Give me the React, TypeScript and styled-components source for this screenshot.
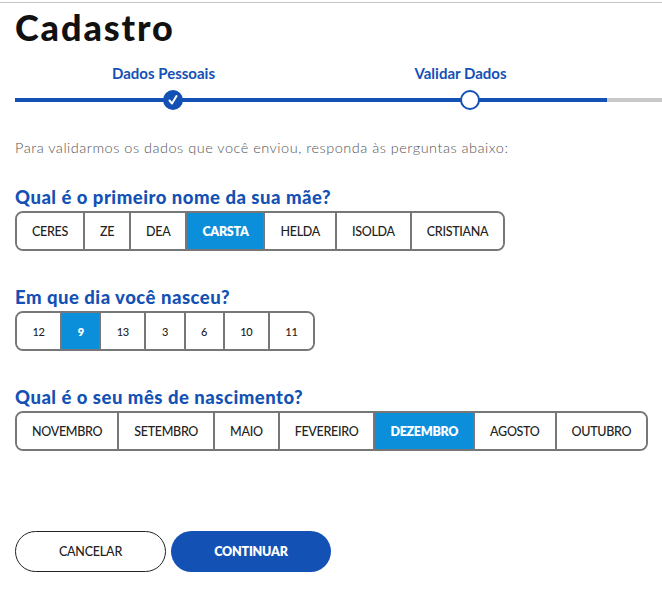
import * as React from "react"
import styled, { createGlobalStyle } from "styled-components"

const GlobalStyle = createGlobalStyle`
  html, body {
    margin: 0;
    padding: 0;
    background: #fff;
    overflow-x: hidden;
  }
  body {
    font-family: "Lato", "Open Sans", sans-serif;
    color: #222;
  }
`

const Page = styled.div`
  border-top: 1px solid #c4c4c4;
  margin-top: 2px;
  padding: 0 0 24px 15px;
`

const Title = styled.h1`
  margin: 2px 0 0;
  font-size: 36px;
  line-height: 44px;
  font-weight: 900;
  color: #111;
  letter-spacing: 1.9px;
`

const Stepper = styled.div`
  position: relative;
  display: flex;
  padding-left: 9px;
  margin-top: 16px;

  &::before {
    content: "";
    position: absolute;
    left: 0;
    width: 592px;
    bottom: 8px;
    height: 4px;
    background: #1351b4;
  }

  &::after {
    content: "";
    position: absolute;
    left: 592px;
    right: 0;
    bottom: 8px;
    height: 4px;
    background: #c8c8c8;
  }
`

const Step = styled.div`
  width: 297px;
  display: flex;
  flex-direction: column;
  align-items: center;
  gap: 9px;
`

const StepLabel = styled.span`
  margin-right: 18px;
  font-size: 15px;
  line-height: 16px;
  font-weight: 700;
  color: #1351b4;
`

const StepDot = styled.span<{ $done?: boolean }>`
  position: relative;
  z-index: 1;
  box-sizing: border-box;
  width: 20px;
  height: 20px;
  border-radius: 50%;
  border: 2px solid #1351b4;
  background: ${(p) => (p.$done ? "#1351b4" : "#fff")};
  display: flex;
  align-items: center;
  justify-content: center;
`

const Intro = styled.p`
  margin: 29px 0 0;
  font-size: 14.5px;
  line-height: 18px;
  font-weight: 300;
  letter-spacing: 0.5px;
  color: #555;
`

const Questions = styled.div`
  display: flex;
  flex-direction: column;
  gap: 35px;
  margin-top: 29px;
`

const Question = styled.section`
  display: flex;
  flex-direction: column;
  align-items: flex-start;
  gap: 3px;
`

const QuestionTitle = styled.h2`
  margin: 0;
  font-size: 18.5px;
  line-height: 22px;
  font-weight: 900;
  letter-spacing: 0.5px;
  color: #1351b4;
`

const Options = styled.div`
  display: flex;
  border: 2px solid #777;
  border-radius: 8px;
  overflow: hidden;
`

const Option = styled.button<{ $selected?: boolean; $small?: boolean }>`
  height: 36px;
  padding: 0 ${(p) => (p.$small ? 15.5 : 15)}px;
  border: none;
  border-left: 2px solid #777;
  background: ${(p) => (p.$selected ? "#0c8fda" : "#fff")};
  color: ${(p) => (p.$selected ? "#fff" : "#222")};
  font-family: inherit;
  font-size: ${(p) => (p.$small ? 11 : 12.5)}px;
  font-weight: ${(p) => (p.$selected ? 800 : 500)};
  letter-spacing: -0.3px;
  cursor: pointer;

  &:first-child {
    border-left: none;
  }
`

const Actions = styled.div`
  display: flex;
  gap: 5px;
  margin-top: 80px;
`

const ActionButton = styled.button<{ $primary?: boolean }>`
  box-sizing: border-box;
  height: 41px;
  width: ${(p) => (p.$primary ? 160 : 151)}px;
  border-radius: 21px;
  border: ${(p) => (p.$primary ? "none" : "1px solid #222")};
  background: ${(p) => (p.$primary ? "#1351b4" : "#fff")};
  color: ${(p) => (p.$primary ? "#fff" : "#222")};
  font-family: inherit;
  font-size: 12.5px;
  font-weight: ${(p) => (p.$primary ? 800 : 500)};
  letter-spacing: -0.2px;
  cursor: pointer;
`

const Check = () => (
  <svg width="12" height="12" viewBox="0 0 12 12" fill="none">
    <path d="M2.5 6.5 L5 9.5 L9.5 2" stroke="#fff" strokeWidth="2" strokeLinecap="round" strokeLinejoin="round" />
  </svg>
)

const questions = [
  {
    title: "Qual é o primeiro nome da sua mãe?",
    options: ["CERES", "ZE", "DEA", "CARSTA", "HELDA", "ISOLDA", "CRISTIANA"],
    selected: "CARSTA",
    small: false,
  },
  {
    title: "Em que dia você nasceu?",
    options: ["12", "9", "13", "3", "6", "10", "11"],
    selected: "9",
    small: true,
  },
  {
    title: "Qual é o seu mês de nascimento?",
    options: ["NOVEMBRO", "SETEMBRO", "MAIO", "FEVEREIRO", "DEZEMBRO", "AGOSTO", "OUTUBRO"],
    selected: "DEZEMBRO",
    small: false,
  },
]

const App = () => {
  const [answers, setAnswers] = React.useState(questions.map((q) => q.selected))

  return (
    <>
      <GlobalStyle />
      <Page>
        <Title>Cadastro</Title>
        <Stepper>
          <Step>
            <StepLabel>Dados Pessoais</StepLabel>
            <StepDot $done>
              <Check />
            </StepDot>
          </Step>
          <Step>
            <StepLabel>Validar Dados</StepLabel>
            <StepDot />
          </Step>
        </Stepper>
        <Intro>Para validarmos os dados que você enviou, responda às perguntas abaixo:</Intro>
        <Questions>
          {questions.map((q, i) => (
            <Question key={q.title}>
              <QuestionTitle>{q.title}</QuestionTitle>
              <Options>
                {q.options.map((opt) => (
                  <Option
                    key={opt}
                    $small={q.small}
                    $selected={answers[i] === opt}
                    onClick={() => setAnswers(answers.map((a, j) => (j === i ? opt : a)))}
                  >
                    {opt}
                  </Option>
                ))}
              </Options>
            </Question>
          ))}
        </Questions>
        <Actions>
          <ActionButton>CANCELAR</ActionButton>
          <ActionButton $primary>CONTINUAR</ActionButton>
        </Actions>
      </Page>
    </>
  )
}

export default App
